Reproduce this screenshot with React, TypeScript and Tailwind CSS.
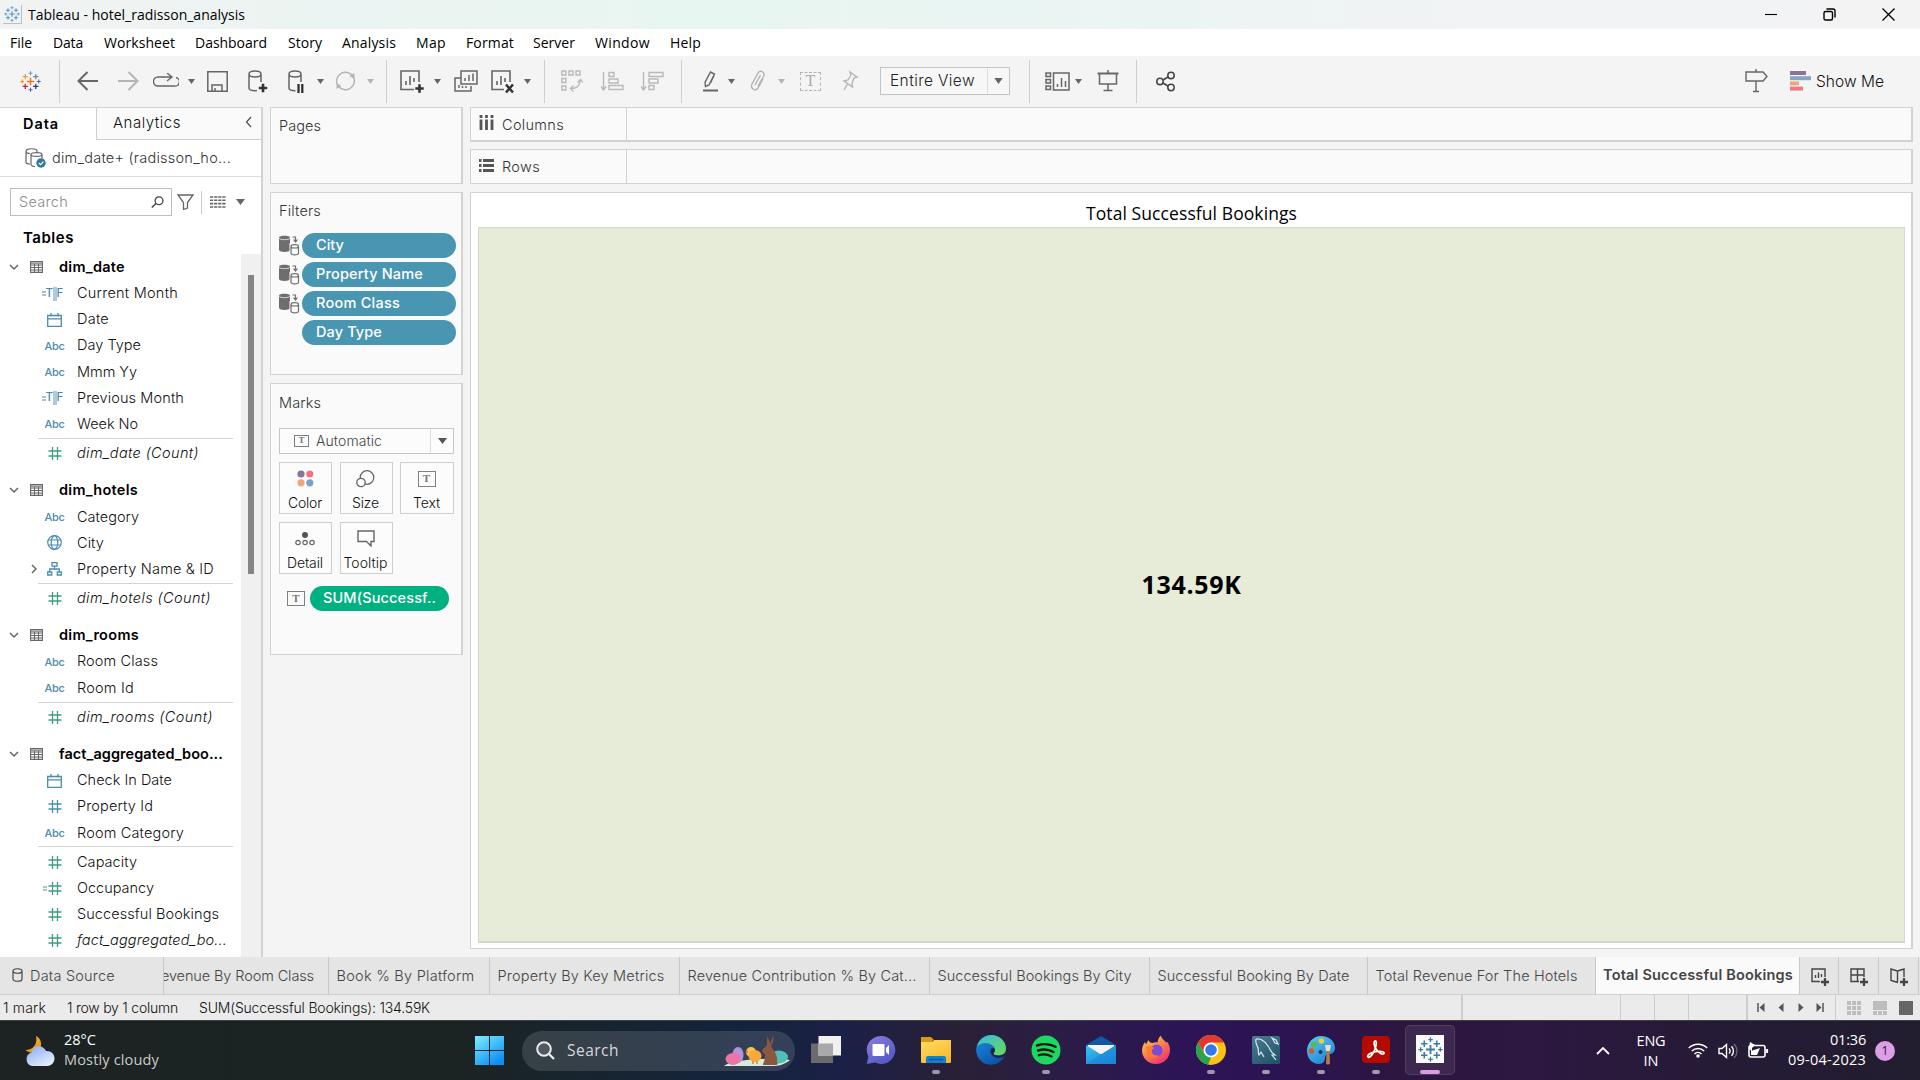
import React, { useLayoutEffect, useRef, useState } from 'react';

/* Text that tunes its tracking so that it fills the given width. */
function T({ w, c = '', children }: { w: number; c?: string; children: string }) {
  const ref = useRef<HTMLSpanElement>(null);
  const [ls, setLs] = useState(0);
  useLayoutEffect(() => {
    const el = ref.current;
    if (!el) return;
    const natural = el.getBoundingClientRect().width - ls * children.length;
    setLs((w - natural) / children.length);
  }, [w, children]);
  return (
    <span ref={ref} className={`inline-block whitespace-pre ${c}`} style={{ letterSpacing: ls }}>
      {children}
    </span>
  );
}

function Svg({ w, h, c = '', vb, children }: { w: number; h: number; c?: string; vb?: string; children: React.ReactNode }) {
  return (
    <svg width={w} height={h} viewBox={vb ?? `0 0 ${w} ${h}`} className={`shrink-0 ${c}`} fill="none" stroke="currentColor" strokeWidth="1.5">
      {children}
    </svg>
  );
}

const plus = (x: number, y: number, r: number) => `M${x - r} ${y}h${2 * r}M${x} ${y - r}v${2 * r}`;

function TableauMark({ size, colors, c = '' }: { size: number; colors: string[]; c?: string }) {
  const pts: [number, number, number, number][] = [
    [14, 14, 5, 2],
    [7, 7.5, 3.6, 1.7], [21, 7.5, 3.6, 1.7], [7, 20.5, 3.6, 1.7], [21, 20.5, 3.6, 1.7],
    [14, 3, 2.6, 1.4], [14, 25, 2.6, 1.4], [3, 14, 2.6, 1.4], [25, 14, 2.6, 1.4],
  ];
  return (
    <Svg w={size} h={size} vb="0 0 28 28" c={c}>
      {pts.map(([x, y, r, s], i) => (
        <path key={i} d={plus(x, y, r)} stroke={colors[i % colors.length]} strokeWidth={s} />
      ))}
    </Svg>
  );
}

const Caret = ({ c }: { c: string }) => (
  <Svg w={7} h={5} c={c}><path d="M0 0h7L3.5 5z" fill="currentColor" stroke="none" /></Svg>
);
const Sep = ({ c }: { c: string }) => <div className={`h-[43px] w-px shrink-0 bg-[#cfcfcf] ${c}`} />;

const Plus = ({ x, y }: { x: number; y: number }) => <path d={plus(x, y, 4.2)} stroke="#333" strokeWidth="2.6" />;

function TitleBar() {
  return (
    <div className="flex h-[29px] items-center bg-[linear-gradient(90deg,#f1f3f3_0%,#ebf4f2_18%,#e8f6f1_36%,#e9f5f2_52%,#f1f3f5_76%,#f3f3f4_100%)]">
      <div className="ml-[3px] flex h-[19px] w-[19px] items-center justify-center border-r border-b border-[#b9c0c4] bg-[#eef3f6]">
        <TableauMark size={16} colors={['#5b93b8']} />
      </div>
      <T w={217} c="ml-[6px] font-['Open_Sans'] text-[14px] text-black">Tableau - hotel_radisson_analysis</T>
      <div className="ml-auto flex items-center text-black">
        <Svg w={12} h={12}><path d="M0 5.500h12" strokeWidth="1.1" /></Svg>
        <Svg w={13} h={13} c="ml-[46px]"><rect x="1" y="3.5" width="8.5" height="8.5" rx="1.5" strokeWidth="1.4" /><path d="M3.5 1H10a2 2 0 0 1 2 2v6.5" strokeWidth="1.4" /></Svg>
        <Svg w={13} h={13} c="mr-[25px] ml-[46px]"><path d="M.5.5l12 12M12.5.5l-12 12" strokeWidth="1.3" /></Svg>
      </div>
    </div>
  );
}

function MenuBar() {
  const items: [string, number, string][] = [
    ['File', 22, 'w-[43px]'], ['Data', 30, 'w-[51px]'], ['Worksheet', 71, 'w-[91px]'], ['Dashboard', 72, 'w-[93px]'],
    ['Story', 34, 'w-[54px]'], ['Analysis', 54, 'w-[74px]'], ['Map', 30, 'w-[50px]'], ['Format', 48, 'w-[67px]'],
    ['Server', 42, 'w-[62px]'], ['Window', 55, 'w-[75px]'], ['Help', 31, 'w-[31px]'],
  ];
  return (
    <div className="flex h-[27px] items-center bg-white pl-[10px] font-['Open_Sans'] text-[14px] text-black">
      {items.map(([t, w, c]) => (
        <div key={t} className={`shrink-0 ${c}`}><T w={w}>{t}</T></div>
      ))}
    </div>
  );
}

const Cyl = () => <path d="M1 4c0-4 12-4 12 0v14c0 3.500-12 3.500-12 0zM1 4c0 4 12 4 12 0" />;

function Toolbar() {
  return (
    <div className="flex h-[51px] items-center bg-[#f4f4f4] pb-px text-[#666]">
      <TableauMark size={21} c="ml-[20px]" colors={['#e8762c', '#e9a13b', '#5b93a7', '#c72035', '#1f457e', '#7199a6', '#5b6591', '#eb912c', '#5b6591']} />
      <Sep c="ml-[18px]" />
      <Svg w={22} h={20} c="ml-[17px]"><path d="M21 10H2M10.500 1L1.500 10l9 9" strokeWidth="2" /></Svg>
      <Svg w={22} h={20} c="ml-[18px] text-[#b4b4b4]"><path d="M1 10h19M11.500 1l9 9-9 9" strokeWidth="2" /></Svg>
      <Svg w={26} h={16} c="ml-[14px]"><path d="M19 4H5a4 4 0 0 0 0 9h16a4 4 0 0 0 2-8.500M14 0l5 4-5 4" strokeWidth="1.400" /></Svg>
      <Caret c="ml-[9px]" />
      <Svg w={21} h={21} c="ml-[12px]"><path d="M.8.8h19.400v19.400H.8zM5 20v-6h10v6M8 20v-3" /></Svg>
      <Svg w={20} h={24} c="ml-[20px] mt-[2px]"><Cyl /><rect x="9" y="12" width="11" height="12" fill="#f4f4f4" stroke="none" /><Plus x={15} y={18} /></Svg>
      <Svg w={16} h={24} c="ml-[20px] mt-[2px]"><Cyl /><rect x="7.500" y="12" width="9" height="12" fill="#f4f4f4" stroke="none" /><path d="M10.500 14v9M14.300 14v9" strokeWidth="2.300" stroke="#333" /></Svg>
      <Caret c="ml-[13px]" />
      <Svg w={23} h={22} c="ml-[10px] text-[#b4b4b4]"><path d="M3 14A9 9 0 0 1 18.500 5.500M20 8a9 9 0 0 1-15.500 8.500" /><path d="M20.500 3v6l-5-3zM2.500 19v-6l5 3z" fill="currentColor" stroke="none" /></Svg>
      <Caret c="ml-[10px] text-[#b4b4b4]" />
      <Sep c="ml-[12px]" />
      <Svg w={25} h={24} c="mt-[2px] ml-[13px]"><path d="M14 19.500H1V1h18v11M6 15V11M10 15V6M14 12V8" strokeWidth="1.600" /><Plus x={19.500} y={18.500} /></Svg>
      <Caret c="ml-[9px]" />
      <Svg w={24} h={22} c="ml-[13px]"><path d="M7 1h16v13H7zM11 11V8M15 11V5M19 11V3.500M7 8H1v13h16v-5M5 18v-3M8.500 18v-2M12 18v-2" /></Svg>
      <Svg w={24} h={24} c="mt-[2px] ml-[13px]"><path d="M13 19.500H1V1h18v11M6 15V11M10 15V6M14 12V8" strokeWidth="1.600" /><path d="M15 14.500l7 8M22 14.500l-7 8" stroke="#333" strokeWidth="2.500" /></Svg>
      <Caret c="ml-[9px]" />
      <Sep c="ml-[13px]" />
      <Svg w={23} h={22} c="ml-[15px] text-[#b9b9b9]"><path d="M1.800 1h4v4h-4zM9 1h4v4H9zM16 1h4v4h-4zM1.800 8.500h4v4h-4zM1.800 16h4v4h-4zM11 18.500c6 0 9-3 9-8M13.500 15.500l-3 3 3 3M17.500 12.500l3-3 2.500 3" strokeWidth="1.400" /></Svg>
      <Svg w={23} h={20} c="ml-[18px] text-[#b9b9b9]"><path d="M2.500 1v17M0 15.500L2.500 19 5 15.500M8 1.500h5v4H8zM8 8h9v4H8zM8 14.500h14v4H8z" strokeWidth="1.400" /></Svg>
      <Svg w={23} h={20} c="ml-[17px] text-[#b9b9b9]"><path d="M2.500 1v17M0 15.500L2.500 19 5 15.500M8 1.500h14v4H8zM8 8h9v4H8zM8 14.500h5v4H8z" strokeWidth="1.400" /></Svg>
      <Sep c="ml-[17px]" />
      <Svg w={17} h={22} c="ml-[20px]"><path d="M3.500 16.500l-.5-4L8.500 2l4 2L7 15zM8.500 13L12 5.500" strokeWidth="1.400" /><path d="M1 20.500h15" strokeWidth="2" /></Svg>
      <Caret c="ml-[9px]" />
      <Svg w={17} h={22} c="ml-[15px] text-[#b4b4b4]"><path d="M5 15L10.500 5M8 16L13.500 6.500c2-4-3-7.500-5.500-3.500L2 14c-2 4.500 3 8 6 4l5-9" strokeWidth="1.400" /></Svg>
      <Caret c="ml-[11px] text-[#b4b4b4]" />
      <div className="ml-[15px] flex h-[19px] w-[21px] shrink-0 items-center justify-center border border-dashed border-[#b4b4b4] font-['Liberation_Serif'] text-[16px] leading-none text-[#aaa]">T</div>
      <Svg w={18} h={22} c="ml-[20px] text-[#b4b4b4]"><path d="M9 2l7 5-3 1-2 5 .5 4L3 11l4-1 3-5zM6.500 14L3 20" strokeWidth="1.400" /></Svg>
      <div className="ml-[21px] flex h-[28px] w-[130px] shrink-0 items-center border border-[#c4c4c4] bg-[#f7f7f7]">
        <T w={85} c="ml-[9px] font-[Inter] text-[15.500px] font-light text-[#222]">Entire View</T>
        <div className="ml-auto flex h-full w-[22px] items-center justify-center border-l border-[#ddd]"><Caret c="w-[9px] h-[6px]" /></div>
      </div>
      <Sep c="ml-[19px]" />
      <Svg w={25} h={19} c="ml-[15px]"><path d="M1 1h4.500v3.500H1zM1 7.500h4.500V11H1zM1 14h4.500v3.500H1zM8.500 1H24v17H8.500zM12.500 15v-3M16.500 15V6M20.500 15V9" strokeWidth="1.500" /></Svg>
      <Caret c="ml-[5px]" />
      <Svg w={22} h={22} c="ml-[15px]"><path d="M.5 3.500h21" strokeWidth="2" /><path d="M2.500 4v10h17V4M11 0v3M11 14v6M6.500 20.500h9" strokeWidth="1.500" /></Svg>
      <Sep c="ml-[17px]" />
      <Svg w={20} h={21} c="ml-[19px] text-[#444]"><circle cx="4" cy="10.500" r="3.200" /><circle cx="15" cy="4.500" r="3.200" /><circle cx="15" cy="16.500" r="3.200" /><path d="M7 9l5-3M7 12l5 3" /></Svg>
      <Svg w={23} h={24} c="ml-auto"><path d="M1 3h17l4 4.500-4 4.500H1zM11 0v3M11 12v10M8 22.500h6" strokeWidth="1.400" /></Svg>
      <Svg w={21} h={20} c="ml-[22px]"><g stroke="none"><path d="M0 0h16v4H0z" fill="#8b7399" /><path d="M0 5.200h21v4H0z" fill="#84a4c9" /><path d="M0 10.400h9v4H0z" fill="#eea67d" /><path d="M0 15.600h13v4H0z" fill="#ee7a84" /></g></Svg>
      <T w={68} c="mr-[36px] ml-[5px] pt-px font-[Inter] text-[15.500px] font-light text-[#111]">Show Me</T>
    </div>
  );
}

const B = '#4b8cad';
const G = '#3f9e7c';

type Kind = 'tf' | 'date' | 'abc' | 'num' | 'numd' | 'calc' | 'geo' | 'hier';
const Hash = ({ color }: { color: string }) => (
  <Svg w={14} h={13}><path d="M4.500 0v13M9.500 0v13M.5 4h13M.5 9h13" stroke={color} strokeWidth="1.300" /></Svg>
);
function FieldIcon({ k }: { k: Kind }) {
  if (k === 'abc') return <T w={20} c="font-[Inter] text-[11px] font-medium text-[#4b8cad]">Abc</T>;
  if (k === 'tf')
    return (
      <div className="-ml-[4px] flex items-center text-[#4b8cad]">
        <Svg w={4} h={5}><path d="M0 1h4M0 4h4" strokeWidth="1.100" /></Svg>
        <span className="w-[7px] font-[Inter] text-[11.500px] leading-none font-medium">T</span>
        <Svg w={4} h={14}><path d="M1 0v14M3 0v14" strokeWidth=".9" /></Svg>
        <span className="font-[Inter] text-[11.500px] leading-none font-medium">F</span>
      </div>
    );
  if (k === 'date') return <Svg w={15} h={14}><path d="M.7 2.500h13.600v10.800H.7zM.7 5.800h13.600M4 0v3.500M11 0v3.500" stroke={B} strokeWidth="1.300" /></Svg>;
  if (k === 'geo') return <Svg w={15} h={15}><g stroke={B} strokeWidth="1.200"><circle cx="7.500" cy="7.500" r="6.800" /><ellipse cx="7.500" cy="7.500" rx="3.300" ry="6.800" /><path d="M1 5h13M1 10h13" /></g></Svg>;
  if (k === 'hier') return <Svg w={15} h={14}><path d="M5 .7h5v3.500H5zM7.500 4v3M2.700 10V7h9.600v3M.7 10h4v3h-4zM10.300 10h4v3h-4z" stroke={B} strokeWidth="1.300" /></Svg>;
  if (k === 'numd') return <Hash color={B} />;
  if (k === 'calc')
    return (
      <div className="-ml-[5px] flex items-center">
        <Svg w={5} h={5}><path d="M0 1h4M0 4h4" stroke={G} strokeWidth="1" /></Svg>
        <Hash color={G} />
      </div>
    );
  return <Hash color={G} />;
}

type Row = [Kind, string, number, boolean?];
const groups: { name: string; w: number; top: Row[]; bottom: Row[] }[] = [
  { name: 'dim_date', w: 66, top: [['tf', 'Current Month', 101], ['date', 'Date', 32], ['abc', 'Day Type', 64], ['abc', 'Mmm Yy', 60], ['tf', 'Previous Month', 107], ['abc', 'Week No', 61]], bottom: [['num', 'dim_date (Count)', 122, true]] },
  { name: 'dim_hotels', w: 79, top: [['abc', 'Category', 62], ['geo', 'City', 27], ['hier', 'Property Name & ID', 137]], bottom: [['num', 'dim_hotels (Count)', 134, true]] },
  { name: 'dim_rooms', w: 80, top: [['abc', 'Room Class', 81], ['abc', 'Room Id', 57]], bottom: [['num', 'dim_rooms (Count)', 136, true]] },
  { name: 'fact_aggregated_boo...', w: 164, top: [['date', 'Check In Date', 95], ['numd', 'Property Id', 76], ['abc', 'Room Category', 107]], bottom: [['num', 'Capacity', 60], ['calc', 'Occupancy', 77], ['num', 'Successful Bookings', 142], ['num', 'fact_aggregated_bo...', 150, true]] },
];

function FieldRow({ r: [k, label, w, it] }: { r: Row }) {
  return (
    <div className="flex h-[26.1px] items-center">
      <div className="ml-[25px] flex w-[12px] shrink-0 justify-end text-[#666]">
        {k === 'hier' && <Svg w={6} h={10}><path d="M1 1l4 4-4 4" /></Svg>}
      </div>
      <div className="flex h-full w-[35px] shrink-0 items-center justify-center pt-[1px]"><FieldIcon k={k} /></div>
      <T w={w} c={it ? 'ml-[5px] italic' : 'ml-[5px]'}>{label}</T>
    </div>
  );
}

function Sidebar() {
  return (
    <div className="flex h-full w-[263px] shrink-0 flex-col border-r-2 border-[#d2d2d2] bg-white font-[Inter] text-[14.500px] font-light text-[#111]">
      <div className="flex h-[33px] shrink-0 border-t border-[#d4d4d4]">
        <div className="flex w-[96px] items-center pb-px pl-[23px]"><T w={36} c="font-semibold text-black">Data</T></div>
        <div className="flex flex-1 items-center border-b border-l border-[#cfcfcf] bg-[#fafafa] pl-[16px]">
          <T w={68} c="text-[15px]">Analytics</T>
          <Svg w={7} h={12} c="-mt-[3px] mr-[9px] ml-auto text-[#555]"><path d="M6 1L1.500 6 6 11" strokeWidth="1.300" /></Svg>
        </div>
      </div>
      <div className="flex h-[37px] shrink-0 items-center border-b border-[#dcdcdc] pl-[25px]">
        <Svg w={21} h={20} c="text-[#666]"><path d="M1 3c0-3 11-3 11 0v1M1 3v11c0 1 1 2 4 2M1 3c0 2 2 2.500 4 2.500M6 6.500c0-2.500 11-2.500 11 0v4M6 6.500v10c0 1 2 2 4 2M6 6.500c0 2.500 11 2.500 11 0" strokeWidth="1.200" /><circle cx="16" cy="15" r="4.700" fill="#33789b" stroke="none" /><path d="M13.800 15l1.700 1.700 3-3" stroke="#fff" strokeWidth="1.200" /></Svg>
        <T w={179} c="ml-[6px] text-[#333]">dim_date+ (radisson_ho...</T>
      </div>
      <div className="mt-[11px] flex h-[28px] shrink-0 items-center pl-[10px] text-[#666]">
        <div className="flex h-full w-[162px] items-center border border-[#bdbdbd] pr-[7px] pl-[8px]">
          <T w={49} c="text-[#8c8c8c]">Search</T>
          <Svg w={13} h={12} c="ml-auto text-[#444]"><circle cx="8" cy="4.800" r="3.900" strokeWidth="1.300" /><path d="M5 7.500L.8 11.500" strokeWidth="1.500" /></Svg>
        </div>
        <Svg w={17} h={16} c="ml-[5px]"><path d="M1 1h15l-5.500 7.500v5.500l-4 1.500v-7z" strokeWidth="1.300" /></Svg>
        <div className="ml-[7px] h-[23px] w-px bg-[#ccc]" />
        <Svg w={16} h={12} c="ml-[8px]"><path d="M0 1h17M0 4.300h17M0 7.600h17M0 11h17" strokeDasharray="3.200 .9" strokeWidth="1.600" /></Svg>
        <Svg w={9} h={6} c="ml-[10px]"><path d="M0 0h9L4.500 6z" fill="currentColor" stroke="none" /></Svg>
      </div>
      <div className="flex h-[38px] shrink-0 items-center pt-[6px] pl-[23px]"><T w={51} c="text-[15px] font-semibold text-black">Tables</T></div>
      <div className="flex min-h-0 flex-1">
        <div className="w-[241px] overflow-hidden">
          {groups.map((g) => (
            <div key={g.name} className="mb-[11.500px]">
              <div className="flex h-[26.1px] items-center text-[#666]">
                <Svg w={10} h={7} c="ml-[9px]"><path d="M1 1l4 4 4-4" /></Svg>
                <Svg w={13} h={12} c="ml-[11px]"><path d="M.6.6h11.800v10.800H.6zM.6 4h11.800M.6 6.500h11.800M.6 9h11.800M4.500 3v8M8.500 3v8" strokeWidth="1.100" /><path d="M1 2.200h11" strokeWidth="1.600" stroke="#999" /></Svg>
                <T w={g.w} c="ml-[16px] font-semibold text-black">{g.name}</T>
              </div>
              {g.top.map((r) => <FieldRow key={r[1]} r={r} />)}
              <div className="mt-px mb-px ml-[38px] h-px w-[195px] bg-[#d4d4d4]" />
              {g.bottom.map((r) => <FieldRow key={r[1]} r={r} />)}
            </div>
          ))}
        </div>
        <div className="flex-1 bg-[#f0f0f0] pt-[21px] pl-[7px]"><div className="h-[299px] w-[6px] bg-[#858585]" /></div>
      </div>
    </div>
  );
}

const TBox = ({ c }: { c: string }) => (
  <span className={`flex shrink-0 items-center justify-center border-[1.500px] border-[#808080] font-['Liberation_Serif'] leading-none font-bold text-[#777] ${c}`}>T</span>
);

function MarkBtn({ label, w, children }: { label: string; w: number; children: React.ReactNode }) {
  return (
    <div className="flex h-[52px] flex-col items-center border border-[#cecece] bg-[#fcfcfc] pr-px text-[14px] text-[#111]">
      <div className="flex h-[32px] items-center justify-center text-[#666]">{children}</div>
      <T w={w} c="leading-[16px]">{label}</T>
    </div>
  );
}

function Cards() {
  const filters: [string, number, boolean][] = [['City', 28, true], ['Property Name', 107, true], ['Room Class', 84, true], ['Day Type', 66, false]];
  return (
    <div className="flex w-[193px] shrink-0 flex-col gap-[8px] font-[Inter] text-[14.500px] font-light text-[#333]">
      <div className="h-[77px] border border-r-2 border-[#d2d2d2] bg-[#fafafa] pt-[7px] pl-[8px]"><T w={42}>Pages</T></div>
      <div className="h-[183px] border border-r-2 border-[#d2d2d2] bg-[#fafafa] pt-[7px] pl-[8px]">
        <T w={42}>Filters</T>
        <div className="mt-[11px] flex flex-col gap-[4px]">
          {filters.map(([t, w, ctx]) => (
            <div key={t} className="flex h-[25px] items-center">
              <div className="w-[23px] shrink-0 text-[#6e6e6e]">
                {ctx && (
                  <Svg w={21} h={21}><path d="M0 2.500C0 0 11 0 11 2.500V15c0 2.500-11 2.500-11 0z" fill="currentColor" stroke="none" /><path d="M0 3c0 2.200 11 2.200 11 0" stroke="#ddd" strokeWidth="1" /><rect x="10.500" y="8" width="10" height="13" fill="#fafafa" stroke="none" /><path d="M12 11.500c0-2.500 7.500-2.500 7.500 0V18c0 2.500-7.500 2.500-7.500 0zM12 11.500c0 2 7.500 2 7.500 0M13.500 2h3v4M14.500 4.500l2 2.500 2-2.500" strokeWidth="1.200" /></Svg>
                )}
              </div>
              <div className="flex h-[25px] w-[154px] shrink-0 items-center rounded-full bg-[#4996b2] pl-[14px] text-white"><T w={w} c="font-medium">{t}</T></div>
            </div>
          ))}
        </div>
      </div>
      <div className="h-[272px] border border-r-2 border-[#d2d2d2] bg-[#fafafa] pt-[8px] pl-[8px]">
        <T w={42}>Marks</T>
        <div className="mt-[14px] flex h-[26px] w-[175px] items-center border border-[#c6c6c6] bg-[#fcfcfc]">
          <TBox c="ml-[14px] h-[12px] w-[15px] text-[9px]" />
          <T w={66} c="ml-[7px] text-[14px] text-[#444]">Automatic</T>
          <div className="ml-auto flex h-full w-[23px] items-center justify-center border-l border-[#ddd] text-[#555]"><Svg w={9} h={6}><path d="M0 0h9L4.500 6z" fill="currentColor" stroke="none" /></Svg></div>
        </div>
        <div className="mt-[8px] grid w-[175px] grid-cols-[53px_53px_54px] gap-x-[7.500px] gap-y-[8px]">
          <MarkBtn label="Color" w={34}><Svg w={17} h={17}><g stroke="none"><circle cx="4" cy="4" r="3.600" fill="#857399" /><circle cx="12.800" cy="4" r="3.600" fill="#f27383" /><circle cx="4" cy="12.800" r="3.600" fill="#eea67d" /><circle cx="12.800" cy="12.800" r="3.600" fill="#7ba0c9" /></g></Svg></MarkBtn>
          <MarkBtn label="Size" w={27}><Svg w={19} h={18}><circle cx="11" cy="7.500" r="6.800" strokeWidth="1.300" /><circle cx="5" cy="12.500" r="4.200" fill="#fcfcfc" strokeWidth="1.300" /></Svg></MarkBtn>
          <MarkBtn label="Text" w={27}><TBox c="h-[16px] w-[18px] text-[11px]" /></MarkBtn>
          <MarkBtn label="Detail" w={36}><Svg w={20} h={14}><circle cx="10" cy="3" r="3" fill="#555" stroke="none" /><circle cx="3" cy="10.500" r="2.200" strokeWidth="1.200" /><circle cx="10" cy="10.500" r="2.200" strokeWidth="1.200" /><circle cx="17" cy="10.500" r="2.200" strokeWidth="1.200" /></Svg></MarkBtn>
          <MarkBtn label="Tooltip" w={44}><Svg w={18} h={17}><path d="M1 1h16v10.500h-3V16L9.500 11.500H1z" strokeWidth="1.400" /></Svg></MarkBtn>
        </div>
        <div className="mt-[12px] flex h-[25px] items-center">
          <TBox c="ml-[8px] h-[15px] w-[18px] text-[11px]" />
          <div className="ml-[5px] flex h-[25px] w-[139px] items-center rounded-full bg-[#00b180] pl-[13px] text-white"><T w={113} c="font-medium">SUM(Successf..</T></div>
        </div>
      </div>
    </div>
  );
}

function Canvas() {
  return (
    <div className="flex min-w-0 flex-1 flex-col font-[Inter] text-[14.500px] font-light text-[#333]">
      <div className="flex h-[35px] shrink-0 border border-r-2 border-b-2 border-[#d2d2d2] bg-[#fafafa]">
        <div className="flex w-[156px] items-center border-r border-[#d2d2d2] pt-px pl-[8px]">
          <Svg w={15} h={15} c="-mt-[5px] text-[#555]"><path d="M2 0v3M7.500 0v3M13 0v3M2 4.500V15M7.500 4.500V15M13 4.500V15" strokeWidth="2.800" /></Svg>
          <T w={62} c="ml-[8px]">Columns</T>
        </div>
      </div>
      <div className="mt-[7px] flex h-[35px] shrink-0 border border-r-2 border-[#d2d2d2] bg-[#fafafa]">
        <div className="flex w-[156px] items-center border-r border-[#d2d2d2] pl-[8px]">
          <Svg w={15} h={13} c="-mt-[3px] text-[#555]"><path d="M0 1.500h2.500M4 1.500h11M0 6.500h2.500M4 6.500h11M0 11.500h2.500M4 11.500h11" strokeWidth="2.800" /></Svg>
          <T w={38} c="ml-[8px]">Rows</T>
        </div>
      </div>
      <div className="mt-[8px] flex h-[757px] shrink-0 flex-col border border-r-2 border-[#d2d2d2] bg-white pr-[6px] pb-[5px] pl-[7px]">
        <div className="flex h-[34px] items-center justify-center pt-[7px]"><T w={211} c="font-['Open_Sans'] text-[17.500px] font-normal text-black">Total Successful Bookings</T></div>
        <div className="flex flex-1 items-center justify-center border border-b-2 border-[#d6d8cf] bg-[#e7ecd9]"><T w={100} c="font-['Open_Sans'] text-[25px] font-bold text-black">134.59K</T></div>
      </div>
    </div>
  );
}

function SheetTabs() {
  const tabs: [string, number, string][] = [
    ['Book % By Platform', 138, 'w-[161px]'], ['Property By Key Metrics', 167, 'w-[190px]'],
    ['Revenue Contribution % By Cat...', 229, 'w-[250px]'], ['Successful Bookings By City', 194, 'w-[220px]'],
    ['Successful Booking By Date', 192, 'w-[218px]'], ['Total Revenue For The Hotels', 202, 'w-[228px]'],
  ];
  return (
    <div className="flex h-[38px] border-b border-[#cfcfcf] bg-[#e5e5e5] font-[Inter] text-[14.500px] font-light text-[#444]">
      <div className="flex w-[164px] shrink-0 items-center border-r border-[#c8c8c8] pl-[12px]">
        <Svg w={11} h={14} c="-mt-[2px]"><path d="M1 3c0-3 9-3 9 0v8c0 3-9 3-9 0zM1 3c0 3 9 3 9 0" strokeWidth="1.200" /></Svg>
        <T w={85} c="ml-[7px]">Data Source</T>
      </div>
      <div className="flex w-[165px] shrink-0 items-center justify-end overflow-hidden border-r border-[#c8c8c8] pr-[14px]"><T w={162} c="shrink-0">Revenue By Room Class</T></div>
      {tabs.map(([t, w, c]) => (
        <div key={t} className={`flex shrink-0 items-center border-r border-[#c8c8c8] pl-[7.500px] ${c}`}><T w={w}>{t}</T></div>
      ))}
      <div className="flex w-[203px] shrink-0 items-center bg-[#fafafa] pb-[2px] pl-[7px]"><T w={190} c="font-semibold text-[#444]">Total Successful Bookings</T></div>
      <div className="flex w-[40px] shrink-0 items-center justify-center border-x border-[#c8c8c8] pt-[3px] pl-[2px]">
        <Svg w={19} h={19}><path d="M9 13.500H1V1h13v8M4.500 10V7M7.500 10V4.500M10.500 9V6" strokeWidth="1.400" /><path d={plus(14, 14, 4)} strokeWidth="2.300" /></Svg>
      </div>
      <div className="flex w-[40px] shrink-0 items-center justify-center border-r border-[#c8c8c8] pt-[3px] pl-[2px]">
        <Svg w={19} h={19}><path d="M9 13.500H1V1h13v8M1 7h13M7.500 1v12" strokeWidth="1.400" /><path d={plus(14, 14, 4)} strokeWidth="2.300" /></Svg>
      </div>
      <div className="flex w-[40px] shrink-0 items-center justify-center border-r border-[#c8c8c8] pt-[3px] pl-[2px]">
        <Svg w={19} h={19}><path d="M8 14.500L1 12.500V1l6.500 2v11M7.500 3L14 1v8" strokeWidth="1.400" /><path d={plus(14, 14, 4)} strokeWidth="2.300" /></Svg>
      </div>
    </div>
  );
}

function StatusBar() {
  return (
    <div className="flex h-[25px] items-center bg-[#ebebeb] pl-[3px] font-[Inter] text-[14px] font-light text-[#111]">
      <T w={43}>1 mark</T>
      <T w={111} c="ml-[21px]">1 row by 1 column</T>
      <T w={231} c="ml-[21px]">SUM(Successful Bookings): 134.59K</T>
      <div className="ml-auto flex h-full shrink-0 items-center text-[#555]">
        <div className="h-full w-[159px] border-l-2 border-[#cdcdcd]" />
        <div className="h-full w-[34px] border-l border-[#cdcdcd]" />
        <div className="h-full w-[34px] border-l border-[#cdcdcd]" />
        <div className="h-full w-[58px] border-l border-[#cdcdcd]" />
        <div className="flex h-full w-[89px] items-center border-l-2 border-[#cdcdcd] pl-[9px]">
          <Svg w={8} h={9}><path d="M1 0v9" /><path d="M7.500 0v9L2.500 4.500z" fill="currentColor" stroke="none" /></Svg>
          <Svg w={6} h={9} c="ml-[13px]"><path d="M5.500 0v9L.5 4.500z" fill="currentColor" stroke="none" /></Svg>
          <Svg w={6} h={9} c="ml-[14px]"><path d="M.5 0v9l5-4.500z" fill="currentColor" stroke="none" /></Svg>
          <Svg w={8} h={9} c="ml-[12px]"><path d="M.5 0v9l5-4.500z" fill="currentColor" stroke="none" /><path d="M7 0v9" /></Svg>
        </div>
        <div className="flex h-full w-[85px] items-center gap-[12px] border-l border-[#cdcdcd] pl-[11px] text-[#bdbdbd]">
          <Svg w={14} h={14}><path d="M0 2h14M0 7h14M0 12h14" strokeDasharray="4 1" strokeWidth="4" /></Svg>
          <Svg w={14} h={14}><path d="M0 4.500h14" strokeWidth="9" /><path d="M0 12h14" strokeDasharray="4 1" strokeWidth="4" /></Svg>
          <div className="h-[14px] w-[14px] bg-[#666]" />
        </div>
      </div>
    </div>
  );
}

function Gradients() {
  const g: [string, string, string][] = [
    ['win', '#7df0ff', '#0c8df8'], ['cloud', '#86a9f2', '#e3eefb'], ['moon', '#f8c23a', '#e88a1a'], ['chat', '#8d7fd8', '#5158c5'],
    ['fold', '#ffdc62', '#f7b92e'], ['edgeA', '#39b8e8', '#66d95b'], ['edgeB', '#1b8fe0', '#0c4fa8'], ['mail', '#3cc3f5', '#1a86d8'],
    ['fox', '#ffdb3a', '#f0316c'], ['sql', '#4a7d93', '#24566b'], ['pal', '#58d0f2', '#2482d6'],
  ];
  return (
    <defs>
      {g.map(([id, a, b]) => (
        <linearGradient key={id} id={id} x1="0" y1="0" x2=".7" y2="1"><stop offset="0" stopColor={a} /><stop offset="1" stopColor={b} /></linearGradient>
      ))}
    </defs>
  );
}

const I = ({ children }: { children: React.ReactNode }) => (
  <svg width="30" height="30" viewBox="0 0 30 30" fill="none">{children}</svg>
);

function TaskIcons() {
  const apps: [React.ReactNode, boolean][] = [
    [<I><path d="M0 8.500h22v19.500H0z" fill="#6b6b6e" /><path d="M7.500 1h22.500v19.500H7.500z" fill="#f1f1f1" /><path d="M7.500 8.500H22v12H7.500z" fill="#a9a9ab" /></I>, false],
    [<I><path d="M15 1a14 14 0 1 1-6 26.500L.8 29l1.500-7.500A14 14 0 0 1 15 1z" fill="url(#chat)" /><rect x="6.500" y="9" width="12" height="12" rx="1" fill="#fff" /><path d="M20 13l3-3v10l-3-3z" fill="#fff" /></I>, false],
    [<I><path d="M0 2h10l3 3h-1l-2 4H0z" fill="#d99a12" /><path d="M0 7h11l2-2h17v22a1 1 0 0 1-1 1H1a1 1 0 0 1-1-1z" fill="url(#fold)" /><path d="M5 28v-5a2 2 0 0 1 2-2h16a2 2 0 0 1 2 2v5z" fill="#1480cf" /><path d="M8 24.500h14" stroke="#0a5aa3" strokeWidth="1.500" /></I>, true],
    [<I><circle cx="15" cy="15" r="14.800" fill="url(#edgeB)" /><path d="M1 12C3 4 9 0 15.500 0 24 0 30 6.500 30 13.500c0 4.500-4 7-8 7-3 0-4.500-1-4.500-2 0-.7 1.500-1.500 1.500-4C19 11 14 8 9.500 8 6 8 2.500 9.500 1 12z" fill="url(#edgeA)" /><path d="M29 21c-2.500 1.800-6 2.500-9 1.500-4-1.200-6.500-5-5-8.500 1.200-1.800 3.500-1 4 .5 0 2.500-1.500 3.300-1.500 4 0 1 1.500 2 4.500 2 2.500 0 5-.5 7-2z" fill="#1f2447" /></I>, false],
    [<I><circle cx="15" cy="15" r="14.500" fill="#1ed760" /><path d="M6 10.500c6-2 13.500-1.500 18.500 1.300M7 15.500c5-1.500 11-1 15.500 1.500M8 20.200c4-1.200 9-.8 12.500 1.300" stroke="#0b1a10" strokeWidth="2.400" strokeLinecap="round" /></I>, true],
    [<I><path d="M0 10L15 1l15 9v4H0z" fill="#1457a4" /><path d="M2 10h26v9H2z" fill="#f5f5f5" /><path d="M0 10l15 9.500L30 10v19H0z" fill="url(#mail)" /><path d="M0 29L30 10v19z" fill="#1a86d8" opacity=".55" /></I>, false],
    [<I><path d="M15 29C7 29 1 23 1 15.500 1 12 2.500 9 4 7l1 2.500C6 7 7 6 7.500 5c.5 2 2 3 4 3 2-1 3.500-1 5-.5C17 4 18.500 1.500 20 .5c0 3 3.500 4.500 5 7l1.500-.5C28 9.500 29 12 29 15c0 8-6 14-14 14z" fill="url(#fox)" /><circle cx="15.500" cy="15.500" r="6" fill="#7b4bd6" /><path d="M5 12c3-2 6-1 8 1l-2 2c-1 4 3 6.500 6.500 5-2.500 4-9 3.500-11-.5z" fill="#fb7d2b" /></I>, false],
    [<I><circle cx="15" cy="15" r="15" fill="#fbc116" /><path d="M2 7.500A15 15 0 0 1 28 7.500H15l-6.500 11z" fill="#de3b30" /><path d="M2 7.500l6.500 11.300L15 22.500l-3 7.200A15 15 0 0 1 2 7.500z" fill="#2ba24c" /><circle cx="15" cy="15" r="7.500" fill="#fff" /><circle cx="15" cy="15" r="5.800" fill="#2f79ea" /></I>, true],
    [<I><rect x="1" y="1" width="28" height="28" rx="1.500" fill="url(#sql)" /><path d="M5 4c4-1 9 2 12 7 3 4 2 6 7 9l-3 0 4 5M5 4c-1 4 1 6 2 9s-.5 5 1 7l2-3 3 5M21 3l4 2 2 4-3-1z" stroke="#dfeaf0" strokeWidth="1.200" /></I>, true],
    [<I><path d="M15 1c8 0 14 5 14 12 0 5-4 6-6 6-3 0-4 2-4 4 0 3-2 6-6 6C6 29 1 23 1 16 1 8 7 1 15 1z" fill="url(#pal)" /><circle cx="8" cy="9.500" r="3" fill="#5fb847" /><circle cx="15.500" cy="6" r="2.700" fill="#f2cc3d" /><circle cx="5.500" cy="16" r="2.700" fill="#d4552f" /><circle cx="14.500" cy="17" r="2" fill="#17356b" /><path d="M19 10h6l-1 6h-4z" fill="#e8ddc8" /><path d="M20.500 16h3l.5 12c0 2-4 2-4 0z" fill="#b57b45" /></I>, true],
    [<I><rect x="1" y="1" width="28" height="27" rx="4" fill="#b30b00" /><path d="M7 22c-1.500-2 3-5 9-5.500 5-.5 7.500.5 7 2-.8 1.800-5.500-.5-8-4.500-2-3-2.500-7.500-1-8 2-.5 1.500 5-.5 9.500C12 19 8.500 23.500 7 22z" stroke="#fff" strokeWidth="1.700" /></I>, true],
  ];
  return (
    <>
      {apps.map(([icon, run], i) => (
        <div key={i} className="flex h-full w-[55px] shrink-0 flex-col items-center pt-[14px]">
          {icon}
          {run && <div className="mt-[5px] h-[4px] w-[8px] rounded-full bg-[#a196ae]" />}
        </div>
      ))}
      <div className="mt-[4px] ml-[2px] flex h-[50px] w-[50px] shrink-0 flex-col items-center self-start rounded-[5px] border border-white/10 bg-white/8 pt-[9px]">
        <div className="flex h-[28px] w-[28px] items-center justify-center bg-[#fafafa]"><TableauMark size={25} colors={['#3c7ba4']} /></div>
        <div className="mt-[7px] h-[4px] w-[20px] rounded-full bg-[#d79fe0]" />
      </div>
    </>
  );
}

function Taskbar() {
  return (
    <div className="flex h-[60px] items-center border-t border-[#3b4147] bg-[linear-gradient(90deg,#1c2322_0%,#1b2423_24%,#14243c_38%,#1b2046_44%,#2a2036_50%,#2a1d45_55%,#2c1457_62%,#2b1450_68%,#2d163f_73%,#2c1840_80%,#251b36_90%,#221d2f_100%)] font-['Open_Sans'] text-[14.500px] text-white">
      <Svg w={32} h={32} c="ml-[24px]"><Gradients /><g stroke="none"><path d="M12 1c6 3 7 11 2 15-4 3-9 2-12.500-1C9 15 14 9 12 1z" fill="url(#moon)" /><path d="M8 31a7 7 0 0 1-.5-13.500C9 10 19 9 22 16c5-.5 8.500 3 8.500 7.500S27 31 23 31z" fill="url(#cloud)" /></g></Svg>
      <div className="-mt-[2px] ml-[8px] flex w-[110px] shrink-0 flex-col items-start leading-[20px]">
        <T w={32}>28°C</T>
        <T w={95} c="text-[#c9cccb]">Mostly cloudy</T>
      </div>
      <Svg w={29} h={29} c="ml-[301px]"><g stroke="none" fill="url(#win)"><path d="M0 0h14v14H0zM15 0h14v14H15zM0 15h14v14H0zM15 15h14v14H15z" /></g></Svg>
      <div className="ml-[18px] flex h-[40px] w-[273px] shrink-0 items-center rounded-full bg-white/13 pl-[14px]">
        <Svg w={19} h={19} c="text-[#e9edef]"><circle cx="8" cy="8" r="6.800" strokeWidth="2" fill="#ffffff22" /><path d="M13 13l5 5" strokeWidth="2.300" /></Svg>
        <T w={52} c="ml-[12px] text-[15.500px] text-[#d5d9dc]">Search</T>
        <Svg w={66} h={32} c="mr-[5px] ml-auto"><g stroke="none"><path d="M0 31c8-7 55-9 66-6-6 5-12 6-18 6z" fill="#d8ecd9" /><ellipse cx="14" cy="20" rx="5.500" ry="8" fill="#b690d8" /><ellipse cx="9" cy="24" rx="7.500" ry="6" fill="#ef72a8" /><ellipse cx="55" cy="22" rx="9" ry="6.500" fill="#4fc0b8" /><circle cx="27" cy="17" r="5" fill="#fbc348" /><ellipse cx="31" cy="21" rx="6.500" ry="6" fill="#f9a93a" /><path d="M21 17l3-2v3z" fill="#e8652a" /><path d="M29 26v3M33 26v3" stroke="#e8652a" strokeWidth="1.200" /><path d="M39 29c2-4 2-7 2-10-3-1-4-4-1-6l3-3 0-8c2 2 3 4 3 7l3-8c1 3 0 7-2 10 3 5 7 9 6 16 2 2 0 3-2 3H39z" fill="#8a5740" /></g></Svg>
      </div>
      <div className="ml-[3px] flex h-full shrink-0 items-center"><TaskIcons /></div>
      <div className="ml-auto flex shrink-0 items-center">
        <Svg w={14} h={9}><path d="M1 8l6-6 6 6" strokeWidth="1.800" /></Svg>
        <div className="ml-[24px] flex w-[34px] flex-col items-center leading-[20px]"><T w={29}>ENG</T><T w={15}>IN</T></div>
        <Svg w={20} h={16} c="ml-[20px] -mt-[2px]"><path d="M.8 6a13 13 0 0 1 18.400 0M3.800 9a9 9 0 0 1 12.400 0M6.500 12a5 5 0 0 1 7 0" strokeWidth="1.500" /><circle cx="10" cy="14" r="1.800" fill="#fff" stroke="none" /></Svg>
        <Svg w={20} h={16} c="ml-[10px]"><path d="M1 5.500h3l4.500-4v13l-4.500-4H1zM11 5.500c1.500 1.500 1.500 3.500 0 5M13.500 3.200c2.600 2.800 2.600 7 0 9.600" strokeWidth="1.400" /><path d="M16 1c4 4 4 10 0 14" strokeWidth="1.300" opacity=".35" /></Svg>
        <Svg w={21} h={16} c="-mt-[2px] ml-[10px]"><rect x="1" y="3.500" width="16" height="11.500" rx="2" strokeWidth="1.600" /><path d="M19 7v4" strokeWidth="2.200" /><path d="M3 9l9-3-3 7H3zM2 0l5 3-3 3 0 4-3-4z" fill="#fff" stroke="none" /></Svg>
        <div className="-mt-[2px] ml-[19px] flex w-[78px] flex-col items-end leading-[20px]"><T w={36}>01:36</T><T w={78}>09-04-2023</T></div>
        <div className="mr-[25px] ml-[9px] flex h-[20px] w-[20px] items-center justify-center rounded-full bg-[#dd9ee8] text-[12px] text-[#2a1838]">1</div>
      </div>
    </div>
  );
}

export default function App() {
  return (
    <div className="flex h-[1080px] w-[1920px] flex-col overflow-hidden bg-[#f4f4f4]">
      <TitleBar />
      <MenuBar />
      <Toolbar />
      <div className="flex h-[850px] shrink-0 gap-[7px] pr-[7px]">
        <Sidebar />
        <Cards />
        <Canvas />
      </div>
      <SheetTabs />
      <StatusBar />
      <Taskbar />
    </div>
  );
}
